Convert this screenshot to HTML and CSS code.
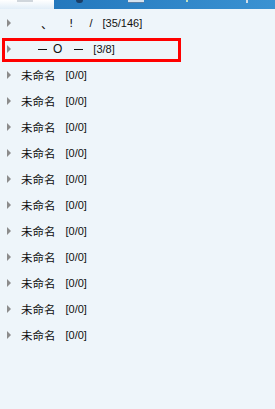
FILE: index.html
```html
<!DOCTYPE html>
<html lang="zh">
<head>
<meta charset="utf-8">
<link rel="stylesheet" href="styles.css">
</head>
<body>
<div class="topbar">
  <div class="tab"><span class="tab-mark"></span></div>
  <div class="bluebar">
    <span class="ico ico-star"></span>
    <span class="ico ico-box"></span>
    <span class="ico ico-dot1"></span>
    <span class="ico ico-dot2"></span>
  </div>
</div>
<ul class="tree">
  <li class="row"><span class="arrow"></span><span class="label"><span class="t r1a">、</span><span class="t r1b">!</span><span class="t r1c">/</span><span class="t r1d">[35/146]</span></span></li>
  <li class="row selected"><span class="arrow"></span><span class="label"><span class="t dash r2a">—</span><span class="t r2b">O</span><span class="t dash r2c">—</span><span class="t r2d">[3/8]</span></span><span class="redbox"></span></li>
  <li class="row"><span class="arrow"></span><span class="label"><span class="name">未命名</span><span class="count">[0/0]</span></span></li>
  <li class="row"><span class="arrow"></span><span class="label"><span class="name">未命名</span><span class="count">[0/0]</span></span></li>
  <li class="row"><span class="arrow"></span><span class="label"><span class="name">未命名</span><span class="count">[0/0]</span></span></li>
  <li class="row"><span class="arrow"></span><span class="label"><span class="name">未命名</span><span class="count">[0/0]</span></span></li>
  <li class="row"><span class="arrow"></span><span class="label"><span class="name">未命名</span><span class="count">[0/0]</span></span></li>
  <li class="row"><span class="arrow"></span><span class="label"><span class="name">未命名</span><span class="count">[0/0]</span></span></li>
  <li class="row"><span class="arrow"></span><span class="label"><span class="name">未命名</span><span class="count">[0/0]</span></span></li>
  <li class="row"><span class="arrow"></span><span class="label"><span class="name">未命名</span><span class="count">[0/0]</span></span></li>
  <li class="row"><span class="arrow"></span><span class="label"><span class="name">未命名</span><span class="count">[0/0]</span></span></li>
  <li class="row"><span class="arrow"></span><span class="label"><span class="name">未命名</span><span class="count">[0/0]</span></span></li>
  <li class="row"><span class="arrow"></span><span class="label"><span class="name">未命名</span><span class="count">[0/0]</span></span></li>
</ul>
</body>
</html>
```
FILE: styles.css
```css
html, body {
  margin: 0;
  padding: 0;
}
body {
  background: #eef5fa;
  width: 275px;
  height: 409px;
  overflow: hidden;
  font-family: "Liberation Sans", "Noto Sans CJK SC", sans-serif;
  font-size: 11px;
  color: #111;
}
.topbar {
  display: flex;
  height: 9px;
}
.tab {
  width: 54px;
  background: linear-gradient(to bottom, #ffffff, #e2eef8);
  display: flex;
}
.tab-mark {
  margin-left: 17px;
  width: 16px;
  height: 2px;
  background: #d0d6dc;
}
.bluebar {
  flex: 1;
  background: linear-gradient(to right, #2478bd, #3a92d2);
  display: flex;
  align-items: flex-start;
}
.ico {
  display: block;
}
.ico-star {
  margin-left: 22px;
  width: 7px;
  height: 3px;
  background: #1a3d66;
  border-radius: 0 0 3px 3px;
}
.ico-box {
  margin-left: 45px;
  width: 16px;
  height: 2px;
  background: #d6e2ee;
  border-bottom: 1px solid #5a7fa5;
}
.ico-dot1 {
  margin-left: 42px;
  width: 2px;
  height: 2px;
  background: #bfe0c0;
}
.ico-dot2 {
  margin-left: 58px;
  width: 2px;
  height: 3px;
  background: #d0dde8;
}
.tree {
  list-style: none;
  margin: 1px 0 0 0;
  padding: 0;
}
.row {
  position: relative;
  display: flex;
  align-items: center;
  height: 26px;
  padding-left: 7px;
}
.arrow {
  width: 0;
  height: 0;
  border-top: 4px solid transparent;
  border-bottom: 4px solid transparent;
  border-left: 4px solid #8c8c8c;
}
.label {
  margin-left: 10px;
  display: flex;
  align-items: center;
  white-space: pre;
}
.name {
  font-family: "Noto Sans CJK SC", sans-serif;
  font-size: 11.5px;
}
.count {
  margin-left: 10px;
}
.t {
  display: inline-block;
  color: #111;
}
.r1a { margin-left: 20px; font-family: "Noto Sans CJK SC", sans-serif; font-size: 12px; }
.r1b { margin-left: 16px; font-family: "DejaVu Sans", sans-serif; font-size: 11px; }
.r1c { margin-left: 16px; }
.r1d { margin-left: 10px; }
.dash {
  display: inline-block;
  width: 9px;
  height: 1px;
  overflow: hidden;
  background: #111;
  color: transparent;
  line-height: 1px;
  font-size: 1px;
}
.r2a { margin-left: 17px; }
.r2b { margin-left: 6px; font-size: 12px; }
.r2c { margin-left: 12px; }
.r2d { margin-left: 10px; }
.redbox {
  position: absolute;
  left: 2px;
  top: 2px;
  width: 173px;
  height: 18px;
  border: 3px solid #ff0000;
}
```
